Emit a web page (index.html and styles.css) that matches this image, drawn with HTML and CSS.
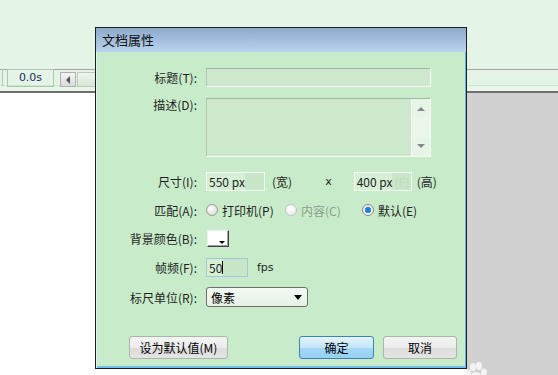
FILE: index.html
```html
<!DOCTYPE html>
<html lang="zh-CN">
<head>
    <meta charset="UTF-8">
    <title>文档属性</title>
    <link rel="stylesheet" href="styles.css">
</head>
<body>
    <div class="app">
        <div class="top-area"></div>

        <div class="timeline">
            <div class="timeline-edge"></div>
            <div class="time-box">0.0s</div>
            <div class="scroll-btn">
                <svg width="6" height="8" viewBox="0 0 6 8"><path d="M5 0 L1 4 L5 8 Z" fill="#555"/></svg>
            </div>
            <div class="scroll-track"></div>
        </div>

        <div class="stage">
            <div class="canvas-area"></div>
            <div class="side-area"></div>
        </div>

        <!-- dialog window sits over the workspace -->
        <div class="dialog">
            <div class="dialog-title">文档属性</div>
            <div class="dialog-body">
                <div class="field">
                    <span class="field-label">标题(T):</span>
                    <div class="text-input wide"></div>
                </div>

                <div class="field field-desc">
                    <span class="field-label">描述(D):</span>
                    <div class="text-area">
                        <div class="scrollbar">
                            <span class="arrow-up"></span>
                            <span class="scroll-mid"></span>
                            <span class="arrow-down"></span>
                        </div>
                    </div>
                </div>

                <div class="field field-size">
                    <span class="field-label">尺寸(I):</span>
                    <div class="text-input size"><span class="value">550 px</span></div>
                    <span class="unit-text">(宽)</span>
                    <span class="times">x</span>
                    <div class="text-input size second"><span class="value">400 px</span><span class="ghost">(E)</span></div>
                    <span class="unit-text tight">(高)</span>
                </div>

                <div class="field field-radio">
                    <span class="field-label">匹配(A):</span>
                    <div class="radio-option first">
                        <span class="radio"></span>
                        <span>打印机(P)</span>
                    </div>
                    <div class="radio-option second disabled">
                        <span class="radio"></span>
                        <span>内容(C)</span>
                    </div>
                    <div class="radio-option">
                        <span class="radio checked"></span>
                        <span>默认(E)</span>
                    </div>
                </div>

                <div class="field field-color">
                    <span class="field-label">背景颜色(B):</span>
                    <div class="swatch"><span class="swatch-arrow"></span></div>
                </div>

                <div class="field field-fps">
                    <span class="field-label">帧频(F):</span>
                    <div class="text-input fps"><span class="value">50</span><span class="caret"></span></div>
                    <span class="fps-text">fps</span>
                </div>

                <div class="field field-unit">
                    <span class="field-label">标尺单位(R):</span>
                    <div class="select-box">
                        <span>像素</span>
                        <svg width="8" height="5" viewBox="0 0 8 5"><path d="M0 0 H8 L4 5 Z" fill="#000"/></svg>
                    </div>
                </div>

                <div class="button-row">
                    <button class="btn">设为默认值(M)</button>
                    <button class="btn btn-primary">确定</button>
                    <button class="btn btn-cancel">取消</button>
                </div>
            </div>
        </div>

        <svg class="paw" width="34" height="16" viewBox="0 0 34 16">
            <ellipse cx="13" cy="6" rx="3" ry="4" fill="#f4f4f4"/>
            <ellipse cx="19" cy="5" rx="3" ry="4" fill="#f4f4f4"/>
            <ellipse cx="8" cy="12" rx="3" ry="3.5" fill="#f4f4f4"/>
            <ellipse cx="24" cy="11" rx="3" ry="3.5" fill="#f4f4f4"/>
            <ellipse cx="16" cy="16" rx="6" ry="5" fill="#f4f4f4"/>
        </svg>
    </div>
</body>
</html>
```

FILE: styles.css
```css
body {
    margin: 0;
    font-family: "Noto Sans CJK SC", sans-serif;
    font-size: 12px;
    color: #1e1e1e;
}

.app {
    position: relative;
    width: 558px;
    height: 375px;
    overflow: hidden;
    display: flex;
    flex-direction: column;
}

.top-area {
    height: 69px;
    background-color: #e4f4e6;
}

.timeline {
    height: 24px;
    box-sizing: border-box;
    display: flex;
    align-items: flex-start;
    background-color: #e4f4e6;
    border-top: 1px solid #a4a4a4;
    border-bottom: 2px solid #6e6e6e;
    box-shadow: inset 0 -5px 0 #e8f5e8, inset 0 -6px 0 #c6ecc8;
}

.timeline-edge {
    width: 2px;
    height: 17px;
    margin-top: -1px;
    border-right: 1px solid #b8c8b8;
}

.time-box {
    width: 47px;
    height: 18px;
    box-sizing: border-box;
    margin-top: -1px;
    margin-left: 4px;
    border: 1px solid #b4c4b4;
    text-align: center;
    line-height: 16px;
    color: #1c2c5c;
    font-family: "DejaVu Sans", sans-serif;
    font-size: 11px;
}

.scroll-btn {
    width: 16px;
    height: 15px;
    box-sizing: border-box;
    margin-top: 2px;
    margin-left: 6px;
    border: 1px solid #b0b0b0;
    background: linear-gradient(#f4f4f4, #dcdcdc);
    display: flex;
    align-items: center;
    justify-content: center;
}

.scroll-track {
    width: 20px;
    height: 15px;
    margin-top: 2px;
    margin-left: 1px;
    box-sizing: border-box;
    border: 1px solid #c0c8c0;
    background: linear-gradient(#eef6ee, #d4e8d4);
}

.stage {
    flex: 1;
    display: flex;
}

.canvas-area {
    width: 467px;
    background-color: #ffffff;
}

.side-area {
    flex: 1;
    background-color: #d0d0d0;
}

.dialog {
    position: absolute;
    left: 95px;
    top: 27px;
    width: 372px;
    height: 342px;
    box-sizing: border-box;
    border: 1px solid #1e1e1e;
    background-color: #c8ecca;
    box-shadow: inset 1px 0 0 #dff2ff, inset -1px 0 0 #5cb6ea, inset 0 -2px 0 #6cc2ee;
}

.dialog-title {
    height: 24px;
    line-height: 24px;
    padding-left: 6px;
    font-size: 13px;
    color: #101010;
    background: linear-gradient(#8eaacc, #b8d4ee);
}

.dialog-body {
    padding-top: 16px;
}

.field {
    display: flex;
    align-items: center;
    height: 19px;
    margin-bottom: 11px;
}

.field-label {
    width: 101px;
    margin-right: 9px;
    text-align: right;
    white-space: nowrap;
}

.field-desc {
    height: 59px;
    align-items: flex-start;
    margin-bottom: 15px;
}

.field-desc .field-label {
    line-height: 14px;
}

.field-size {
    margin-bottom: 11px;
}

.field-radio,
.field-color {
    height: 16px;
    margin-bottom: 12px;
}

.field-fps {
    margin-bottom: 10px;
}

.field-unit {
    height: 20px;
    margin-bottom: 29px;
}

.text-input {
    height: 19px;
    box-sizing: border-box;
    background-color: #cde8cc;
    border: 1px solid #ffffff;
    border-top-color: #a8b4a8;
    border-left-color: #b4c4b4;
    display: flex;
    align-items: center;
    padding-left: 2px;
    color: #1e1e1e;
}

.text-input.wide {
    width: 225px;
}

.text-input.size {
    width: 59px;
    border-color: #f6fbf6;
    background: linear-gradient(90deg, #d6f0d6 0, #d6f0d6 66%, #c8e6c8 66%);
}

.text-input.second {
    margin-left: 22px;
    width: 58px;
}

.ghost {
    color: #c0dcc0;
    margin-left: 2px;
}

.text-input.fps {
    width: 42px;
    border-color: #a8c4d8;
    background: linear-gradient(90deg, #d6f0d6 0, #d6f0d6 40%, #c8e6c8 40%);
}

.caret {
    width: 1px;
    height: 13px;
    background-color: #000;
}

.text-area {
    width: 225px;
    height: 59px;
    box-sizing: border-box;
    background-color: #cde8cc;
    border: 1px solid #ffffff;
    border-top-color: #a8b4a8;
    border-left-color: #b4c4b4;
    display: flex;
    justify-content: flex-end;
}

.scrollbar {
    width: 18px;
    display: flex;
    flex-direction: column;
    align-items: center;
    background-color: #e6f5e6;
    border-left: 1px solid #f4faf4;
}

.arrow-up,
.arrow-down {
    width: 0;
    height: 0;
    border-left: 4px solid transparent;
    border-right: 4px solid transparent;
}

.arrow-up {
    margin-top: 8px;
    border-bottom: 4px solid #888;
}

.arrow-down {
    margin-bottom: 8px;
    border-top: 4px solid #888;
}

.scroll-mid {
    flex: 1;
    width: 100%;
    margin: 6px 0;
    background-color: #ecf7ec;
}

.unit-text {
    margin-left: 7px;
}

.unit-text.tight {
    margin-left: 5px;
}

.times {
    margin-left: 33px;
    font-family: "DejaVu Sans", sans-serif;
    font-size: 11px;
}

.radio-option {
    display: flex;
    align-items: center;
    gap: 4px;
}

.radio-option.first {
    width: 79px;
}

.radio-option.second {
    width: 77px;
}

.radio-option.disabled {
    color: #8c9c8c;
}

.radio {
    width: 12px;
    height: 12px;
    box-sizing: border-box;
    border-radius: 50%;
    border: 1px solid #9a9a9a;
    background: radial-gradient(circle at 40% 35%, #ffffff, #d4d4d4);
}

.radio-option.disabled .radio {
    border-color: #c4c4c4;
    background: radial-gradient(circle at 40% 35%, #ffffff, #e6e6e6);
}

.radio.checked {
    background: radial-gradient(circle, #1a7ad0 0, #2a8ee0 3px, #ffffff 3.5px, #dcdcdc 6px);
    border-color: #8a8a8a;
}

.swatch {
    position: relative;
    width: 22px;
    height: 17px;
    margin-left: 1px;
    box-sizing: border-box;
    background-color: #ffffff;
    border: 1px solid #f0f0f0;
    border-right-color: #404040;
    border-bottom-color: #404040;
    box-shadow: inset -1px -1px 0 #a0a0a0;
}

.swatch-arrow {
    position: absolute;
    right: 3px;
    bottom: 2px;
    width: 0;
    height: 0;
    border-left: 3px solid transparent;
    border-right: 3px solid transparent;
    border-top: 3px solid #000;
}

.fps-text {
    margin-left: 9px;
    font-family: "DejaVu Sans", sans-serif;
    font-size: 11px;
}

.select-box {
    width: 102px;
    height: 20px;
    box-sizing: border-box;
    border: 1px solid #6e6e6e;
    border-radius: 3px;
    background: linear-gradient(#f4faf4, #e6f2e6);
    display: flex;
    align-items: center;
    justify-content: space-between;
    padding: 0 5px 0 4px;
    color: #000;
}

.button-row {
    display: flex;
    padding: 0 9px 0 33px;
}

.btn {
    height: 23px;
    box-sizing: border-box;
    border: 1px solid #a8b8a8;
    border-radius: 3px;
    background: linear-gradient(#f4f4f4 0, #ececec 50%, #dddddd 51%, #e4e4e4 100%);
    font-family: "Noto Sans CJK SC", sans-serif;
    font-size: 12px;
    color: #000;
    padding: 0;
    width: 99px;
}

.btn-primary {
    width: 75px;
    margin-left: auto;
    border-color: #3c84b8;
    background: linear-gradient(#e6f5fd 0, #bfe5fb 50%, #a4d8f6 51%, #98d0f2 100%);
}

.btn-cancel {
    width: 74px;
    margin-left: 9px;
}

.paw {
    position: absolute;
    left: 460px;
    top: 361px;
}
```
